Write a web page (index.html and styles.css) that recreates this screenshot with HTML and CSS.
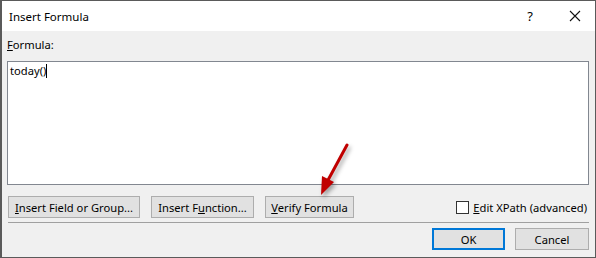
FILE: index.html
```html
<!DOCTYPE html>
<html lang="en">
<head>
    <meta charset="UTF-8">
    <title>Insert Formula</title>
    <link rel="stylesheet" href="styles.css">
</head>
<body>

    <div class="dialog">
        <div class="titlebar">
            <span class="title">Insert Formula</span>
            <span class="help">?</span>
            <svg class="close" width="12" height="12" viewBox="0 0 12 12">
                <path d="M1 1 L11 11 M11 1 L1 11" stroke="#111" stroke-width="1.1" fill="none"/>
            </svg>
        </div>

        <div class="content">
            <div class="label"><u>F</u>ormula:</div>
            <div class="formula">today()<span class="caret"></span></div>

            <div class="tools">
                <button class="btn btn-field"><u>I</u>nsert Field or Group...</button>
                <button class="btn btn-func">Insert F<u>u</u>nction...</button>
                <button class="btn btn-verify"><u>V</u>erify Formula</button>
                <label class="xpath"><span class="check"></span><u>E</u>dit XPath (advanced)</label>
            </div>

            <div class="separator"></div>

            <div class="actions">
                <button class="btn btn-ok">OK</button>
                <button class="btn btn-cancel">Cancel</button>
            </div>
        </div>

        <!-- red arrow pointing at Verify Formula -->
        <svg class="arrow" width="60" height="70" viewBox="0 0 60 70">
            <line x1="49" y1="5" x2="29" y2="42" stroke="#c00000" stroke-width="3" stroke-linecap="round"/>
            <polygon points="23,55 24,36 36,42" fill="#c00000"/>
        </svg>
    </div>

</body>
</html>
```

FILE: styles.css
```css
body {
    margin: 0;
    font-family: "Noto Sans", Arial, sans-serif;
    font-size: 11.2px;
    color: #000;
}
.dialog {
    position: relative;
    width: 596px;
    height: 258px;
    box-sizing: border-box;
    border: 1px solid #5a5a5a;
    border-left-width: 2px;
    background-color: #f0f0f0;
    display: flex;
    flex-direction: column;
}
.titlebar {
    height: 30px;
    background-color: white;
    display: flex;
    align-items: center;
    padding-left: 7px;
    padding-right: 14px;
    font-size: 11.5px;
}
.title {
    flex: 1;
}
.help {
    font-size: 13px;
    margin-right: 36px;
}
.content {
    flex: 1;
    padding: 5px 6px 0 5px;
    display: flex;
    flex-direction: column;
}
.label {
    line-height: 18px;
    height: 25px;
}
.formula {
    height: 124px;
    box-sizing: border-box;
    background-color: white;
    border: 1px solid #828790;
    padding: 1px 2px;
    line-height: 16px;
}
.caret {
    display: inline-block;
    width: 1px;
    height: 14px;
    background-color: #000;
    vertical-align: -3px;
}
.tools {
    display: flex;
    align-items: center;
    margin-top: 11px;
    padding-left: 1px;
}
.btn {
    font-family: inherit;
    font-size: 11.2px;
    height: 22px;
    padding: 0;
    background-color: #e1e1e1;
    border: 1px solid #adadad;
    color: #000;
}
.btn-field {
    width: 132px;
}
.btn-func {
    width: 103px;
    margin-left: 11px;
}
.btn-verify {
    width: 89px;
    margin-left: 11px;
}
.xpath {
    margin-left: auto;
    display: flex;
    align-items: center;
    margin-right: 2px;
}
.check {
    width: 11px;
    height: 11px;
    border: 1px solid #333;
    background-color: white;
    margin-right: 4px;
}
.separator {
    height: 1px;
    background-color: #a0a0a0;
    margin-top: 4px;
    margin-left: 1px;
}
.actions {
    display: flex;
    justify-content: flex-end;
    margin-top: 5px;
}
.btn-ok {
    width: 73px;
    border: 2px solid #0078d7;
}
.btn-cancel {
    width: 74px;
    margin-left: 10px;
}
.arrow {
    position: absolute;
    left: 296px;
    top: 139px;
    filter: drop-shadow(2px 3px 2px rgba(0, 0, 0, 0.35));
}
```
